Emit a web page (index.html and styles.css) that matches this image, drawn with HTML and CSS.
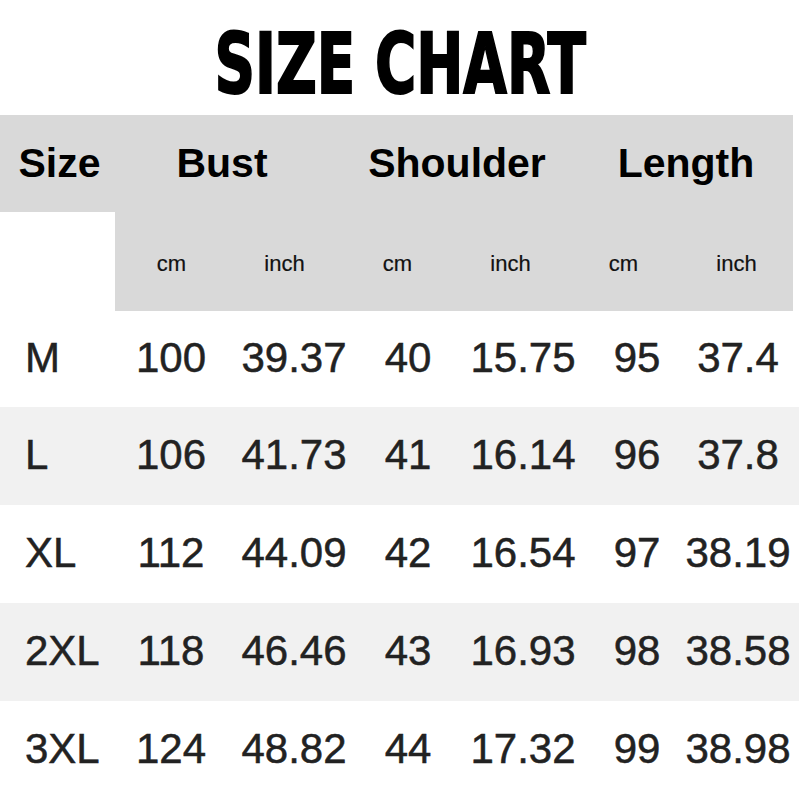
FILE: index.html
```html
<!DOCTYPE html>
<html>
<head>
<meta charset="utf-8">
<link rel="stylesheet" href="styles.css">
</head>
<body>
<div class="page">
  <div class="title-wrap"><h1 class="title">SIZE CHART</h1></div>
  <div class="head-row">
    <div class="h-size">Size</div>
    <div class="h-group">Bust</div>
    <div class="h-group">Shoulder</div>
    <div class="h-group">Length</div>
  </div>
  <div class="sub-row">
    <div class="sub-blank"></div>
    <div class="sub-band">
      <div>cm</div><div>inch</div><div>cm</div><div>inch</div><div>cm</div><div>inch</div>
    </div>
  </div>
  <div class="row first">
    <div class="size">M</div><div>100</div><div>39.37</div><div>40</div><div>15.75</div><div>95</div><div>37.4</div>
  </div>
  <div class="row alt">
    <div class="size">L</div><div>106</div><div>41.73</div><div>41</div><div>16.14</div><div>96</div><div>37.8</div>
  </div>
  <div class="row">
    <div class="size">XL</div><div>112</div><div>44.09</div><div>42</div><div>16.54</div><div>97</div><div>38.19</div>
  </div>
  <div class="row alt">
    <div class="size">2XL</div><div>118</div><div>46.46</div><div>43</div><div>16.93</div><div>98</div><div>38.58</div>
  </div>
  <div class="row">
    <div class="size">3XL</div><div>124</div><div>48.82</div><div>44</div><div>17.32</div><div>99</div><div>38.98</div>
  </div>
</div>
</body>
</html>
```

FILE: styles.css
```css
html, body {
  margin: 0;
  padding: 0;
  background: #ffffff;
}
.page {
  width: 800px;
  height: 800px;
  overflow: hidden;
  font-family: "Liberation Sans", Arial, sans-serif;
}
.title-wrap {
  height: 115px;
  display: flex;
  align-items: center;
  justify-content: center;
}
.title {
  margin: 0;
  font-family: "DejaVu Sans Condensed", "Liberation Sans", sans-serif;
  font-weight: 700;
  font-size: 84px;
  line-height: 1;
  color: #000;
  -webkit-text-stroke: 2px #000;
  transform: scaleX(0.745);
  position: relative;
  top: 6px;
  left: 0px;
  white-space: nowrap;
}
.head-row {
  height: 97px;
  width: 793px;
  background: #d9d9d9;
  display: grid;
  grid-template-columns: 115px 228px 228px 222px;
  align-items: center;
  font-weight: 700;
  font-size: 41px;
  color: #000;
}
.head-row > div {
  text-align: center;
}
.h-size { padding-left: 4px; }
.head-row .h-group:nth-child(2) { padding-right: 14px; }
.head-row .h-group:nth-child(4) { padding-left: 8px; }
.sub-row {
  height: 99px;
  display: flex;
}
.sub-blank {
  width: 115px;
}
.sub-band {
  width: 678px;
  background: #d9d9d9;
  display: grid;
  grid-template-columns: repeat(6, 1fr);
  align-items: center;
  font-size: 22px;
  color: #111;
  padding-top: 4px;
  box-sizing: border-box;
  -webkit-text-stroke: 0.2px #111;
}
.sub-band > div {
  text-align: center;
}
.row {
  height: 98px;
  width: 799px;
  display: grid;
  grid-template-columns: 115px 112px 134px 94px 136px 92px 110px;
  align-items: center;
  font-size: 42px;
  color: #222;
  -webkit-text-stroke: 0.5px #222;
}
.row.first {
  height: 96px;
}
.row > div {
  text-align: center;
  padding-bottom: 3px;
}
.row > .size {
  text-align: left;
  padding-left: 25px;
}
.alt {
  background: #f1f1f1;
}
```
